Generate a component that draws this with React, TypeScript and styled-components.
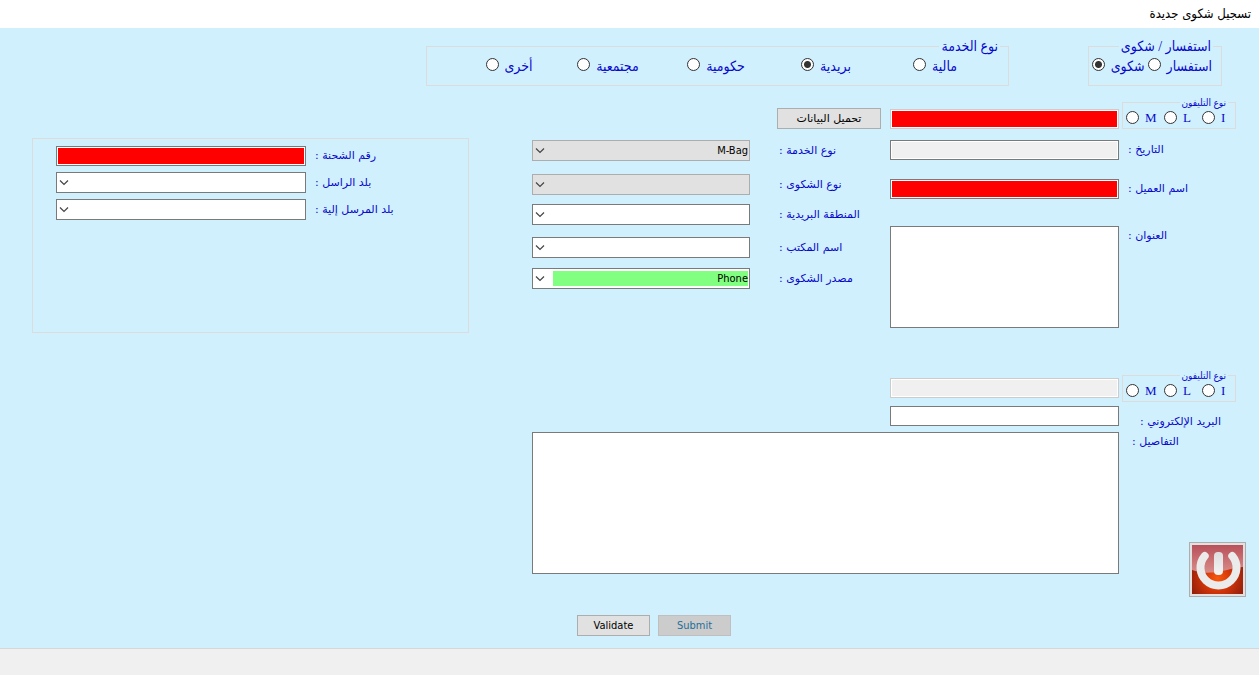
import React, { useState } from "react";
import styled, { createGlobalStyle } from "styled-components";

const uiFont = `"DejaVu Sans Condensed", "DejaVu Sans", sans-serif`;
const wideFont = `"DejaVu Sans", sans-serif`;
const serifFont = `"Liberation Serif", "DejaVu Sans Condensed", "DejaVu Sans", serif`;

const GlobalStyle = createGlobalStyle`
  *, *::before, *::after { box-sizing: border-box; }
  body { margin: 0; font-family: ${uiFont}; font-size: 11px; }
  button, input, select, textarea { font: inherit; margin: 0; border-radius: 0; }
`;

const Window = styled.div`
  direction: rtl;
  min-height: 100vh;
  display: flex;
  flex-direction: column;
  background: #d1f0fe;
  color: #0808cc;
`;

const TitleBar = styled.header`
  height: 28px;
  padding: 0 8px;
  display: flex;
  align-items: center;
  background: #fff;
`;

const Title = styled.h1`
  margin: 0;
  color: #000;
  font-size: 13px;
  line-height: 16px;
  font-weight: 400;
`;

const StatusBar = styled.footer`
  height: 27px;
  background: #f0f0f0;
  border-top: 1px solid #d7d7d7;
`;

const Body = styled.main`
  flex: 1;
  padding: 10px 0 12px;
`;

const TopGroups = styled.div`
  display: grid;
  grid-template-columns: 134px minmax(0, 1fr);
  column-gap: 79px;
  padding-right: 37px;
  padding-left: 33.8%;
`;

const GroupBox = styled.fieldset<{ $small?: boolean }>`
  min-width: 0;
  margin: 0;
  padding: 0;
  height: ${(p) => (p.$small ? 33 : 48)}px;
  border: 1px solid #dcdcdc;
  font-family: ${serifFont};
  font-size: ${(p) => (p.$small ? 13 : 14)}px;
`;

const Legend = styled.legend<{ $small?: boolean }>`
  margin-right: ${(p) => (p.$small ? 7 : 8)}px;
  padding: 0 2px;
  font-size: ${(p) => (p.$small ? 10 : 14)}px;
  line-height: ${(p) => (p.$small ? 13 : 17)}px;
`;

type RadioKind = "inquiry" | "service" | "phone";

const radioColumns: Record<RadioKind, string> = {
  inquiry: "max-content max-content",
  service: "repeat(5, 1fr)",
  phone: "24px 38px 38px",
};

const RadioRow = styled.div<{ $kind: RadioKind }>`
  display: grid;
  grid-template-columns: ${(p) => radioColumns[p.$kind]};
  column-gap: ${(p) => (p.$kind === "inquiry" ? 3 : 0)}px;
  padding-right: ${(p) => (p.$kind === "service" ? 51 : 9)}px;
`;

const RadioLabel = styled.label<{ $kind: RadioKind }>`
  display: flex;
  align-items: flex-start;
  justify-content: ${(p) => (p.$kind === "phone" ? "flex-end" : "flex-start")};
  gap: 6px;
  line-height: ${(p) => (p.$kind === "phone" ? 18 : 24)}px;
  white-space: nowrap;
`;

const RadioInput = styled.input<{ $kind: RadioKind }>`
  appearance: none;
  flex: none;
  width: 13px;
  height: 13px;
  border: 1px solid #333;
  && {
    margin-top: ${(p) => (p.$kind === "phone" ? 2 : 3)}px;
    border-radius: 50%;
  }
  background: #fff;
  &:checked { background: radial-gradient(circle, #333 3px, #fff 4px); }
`;

const Columns = styled.div`
  display: grid;
  grid-template-columns: minmax(0, 714fr) minmax(0, 437fr);
  column-gap: 63px;
  padding: 10px 13px 0 32px;
`;

const FormArea = styled.div`
  min-width: 0;
`;

const Halves = styled.div`
  display: grid;
  grid-template-columns: minmax(0, 356fr) minmax(0, 349fr);
  column-gap: 9px;
`;

const Stack = styled.div`
  display: flex;
  flex-direction: column;
`;

const Row = styled.div<{ $top?: number; $side: number; $start?: boolean }>`
  display: grid;
  grid-template-columns: ${(p) => p.$side}px minmax(0, 1fr);
  align-items: ${(p) => (p.$start ? "start" : "center")};
  margin-top: ${(p) => p.$top ?? 0}px;
`;

const FieldLabel = styled.label<{ $inset?: number; $above?: number }>`
  padding-top: ${(p) => p.$above ?? 0}px;
  padding-left: ${(p) => p.$inset ?? 9}px;
  text-align: left;
  font-family: ${wideFont};
  font-size: 11px;
  line-height: 20px;
  white-space: nowrap;
`;

const TextInput = styled.input<{ $fill?: string; $light?: boolean }>`
  width: 100%;
  height: 20px;
  padding: 0 4px;
  border: 1px solid ${(p) => (p.$light ? "#ccc" : "#7a7a7a")};
  background: ${(p) => p.$fill ?? "#fff"};
  box-shadow: inset 0 0 0 1px #fff;
  outline: 0;
`;

const TextArea = styled.textarea<{ $height: number }>`
  display: block;
  width: 100%;
  height: ${(p) => p.$height}px;
  border: 1px solid #7a7a7a;
  background: #fff;
  resize: none;
  outline: 0;
`;

const SelectWrap = styled.div`
  position: relative;
`;

const SelectBox = styled.select<{ $tone?: "grey" | "green" }>`
  appearance: none;
  display: block;
  width: 100%;
  height: 21px;
  padding: 2px 1px 2px 20px;
  border: 1px solid ${(p) => (p.$tone === "grey" ? "#adadad" : "#7a7a7a")};
  background: ${(p) =>
    p.$tone === "grey"
      ? "#e1e1e1"
      : p.$tone === "green"
        ? "linear-gradient(#80ff80, #80ff80) content-box, #fff"
        : "#fff"};
  color: #000;
  text-align: right;
  outline: 0;
  &:disabled { opacity: 1; color: #000; }
`;

const Arrow = styled.svg`
  position: absolute;
  left: 3px;
  top: 7px;
  pointer-events: none;
`;

const PhoneGroupCell = styled.div`
  padding: 0 10px 0 3px;
`;

const PhoneRow = styled(Row)`
  align-items: end;
`;

const PhoneInput = styled(TextInput)<{ $lift?: number }>`
  && { margin-bottom: ${(p) => p.$lift ?? 0}px; }
`;

const Button = styled.button<{ $width: number; $wide?: boolean }>`
  width: ${(p) => p.$width}px;
  height: 21px;
  padding: 0;
  border: 1px solid #adadad;
  background: #e1e1e1;
  color: #000;
  && { font-family: ${(p) => (p.$wide ? wideFont : uiFont)}; }
  &:disabled { background: #ccc; border-color: #bfbfbf; color: #1f6f98; }
`;

const Details = styled.div`
  display: grid;
  grid-template-columns: 127px minmax(0, 1fr);
`;

const DetailsSide = styled.div`
  display: flex;
  flex-direction: column;
  justify-content: space-between;
  padding-bottom: 39px;
`;

const Actions = styled.div`
  direction: ltr;
  display: flex;
  gap: 8px;
  margin-top: 41px;
  padding-left: 45px;
`;

const PowerButton = styled.button`
  width: 57px;
  height: 55px;
  padding: 2px;
  border: 1px solid #adadad;
  background: #e1e1e1;
  svg { display: block; width: 100%; height: 100%; }
`;

const ShipmentPanel = styled.section`
  height: 195px;
  margin-top: 42px;
  padding: 7px 0 0 23px;
  border: 1px solid #dcdcdc;
`;

function Combo({ id, value = "", tone }: { id: string; value?: string; tone?: "grey" | "green" }) {
  return (
    <SelectWrap>
      <SelectBox id={id} $tone={tone} disabled={tone === "grey"} defaultValue={value}>
        <option value={value}>{value}</option>
      </SelectBox>
      <Arrow width="10" height="8" viewBox="0 0 10 8" fill="none" stroke="#444" strokeWidth="1.2" aria-hidden="true">
        <path d="M1 1.5 5 5.5 9 1.5" />
      </Arrow>
    </SelectWrap>
  );
}

function Radios({
  name,
  kind,
  items,
  initial,
}: {
  name: string;
  kind: RadioKind;
  items: string[];
  initial?: string;
}) {
  const [picked, setPicked] = useState(initial);
  return (
    <RadioRow $kind={kind}>
      {items.map((item) => (
        <RadioLabel key={item} $kind={kind}>
          {item}
          <RadioInput
            $kind={kind}
            type="radio"
            name={name}
            checked={picked === item}
            onChange={() => setPicked(item)}
          />
        </RadioLabel>
      ))}
    </RadioRow>
  );
}

function PhoneType({ name }: { name: string }) {
  return (
    <PhoneGroupCell>
      <GroupBox $small>
        <Legend $small>نوع التليفون</Legend>
        <Radios name={name} kind="phone" items={["I", "L", "M"]} />
      </GroupBox>
    </PhoneGroupCell>
  );
}

const complaintFields: { id: string; label: string; top: number; value?: string; tone?: "grey" | "green" }[] = [
  { id: "service", label: "نوع الخدمة :", top: 11, value: "M-Bag", tone: "grey" },
  { id: "kind", label: "نوع الشكوى :", top: 13, tone: "grey" },
  { id: "zone", label: "المنطقة البريدية :", top: 9 },
  { id: "office", label: "اسم المكتب :", top: 12 },
  { id: "source", label: "مصدر الشكوى :", top: 10, value: "Phone", tone: "green" },
];

export default function App() {
  return (
    <Window lang="ar">
      <GlobalStyle />
      <TitleBar>
        <Title>تسجيل شكوى جديدة</Title>
      </TitleBar>
      <Body>
        <TopGroups>
          <GroupBox>
            <Legend>استفسار / شكوى</Legend>
            <Radios name="request" kind="inquiry" items={["استفسار", "شكوى"]} initial="شكوى" />
          </GroupBox>
          <GroupBox>
            <Legend>نوع الخدمة</Legend>
            <Radios
              name="sector"
              kind="service"
              items={["مالية", "بريدية", "حكومية", "مجتمعية", "أخرى"]}
              initial="بريدية"
            />
          </GroupBox>
        </TopGroups>
        <Columns>
          <FormArea>
            <Halves>
              <Stack>
                <PhoneRow $side={127}>
                  <PhoneType name="phone1" />
                  <PhoneInput aria-label="رقم التليفون" $fill="#f00" $light />
                </PhoneRow>
                <Row $side={127} $top={11} $start>
                  <FieldLabel htmlFor="date">التاريخ :</FieldLabel>
                  <TextInput id="date" $fill="#f0f0f0" readOnly />
                </Row>
                <Row $side={127} $top={19}>
                  <FieldLabel htmlFor="customer">اسم العميل :</FieldLabel>
                  <TextInput id="customer" $fill="#f00" />
                </Row>
                <Row $side={127} $top={27} $start>
                  <FieldLabel htmlFor="address">العنوان :</FieldLabel>
                  <TextArea id="address" $height={102} />
                </Row>
              </Stack>
              <Stack>
                <Row $side={104} $top={12}>
                  <Button type="button" $width={104} $wide>تحميل البيانات</Button>
                </Row>
                {complaintFields.map((f) => (
                  <Row key={f.id} $side={131} $top={f.top}>
                    <FieldLabel htmlFor={f.id} $inset={29}>{f.label}</FieldLabel>
                    <Combo id={f.id} value={f.value} tone={f.tone} />
                  </Row>
                ))}
              </Stack>
            </Halves>
            <Halves>
              <Stack>
                <PhoneRow $side={127} $top={41}>
                  <PhoneType name="phone2" />
                  <PhoneInput aria-label="رقم تليفون آخر" $fill="#f0f0f0" $light $lift={4} disabled />
                </PhoneRow>
                <Row $side={127} $top={4} $start>
                  <FieldLabel htmlFor="email" $inset={21} $above={6}>البريد الإلكتروني :</FieldLabel>
                  <TextInput id="email" type="email" />
                </Row>
              </Stack>
            </Halves>
            <Details>
              <DetailsSide>
                <FieldLabel htmlFor="details" $inset={13}>التفاصيل :</FieldLabel>
                <PowerButton type="button" aria-label="خروج">
                  <svg viewBox="0 0 51 49" aria-hidden="true">
                    <defs>
                      <radialGradient id="glow" cx="50%" cy="68%" r="56%">
                        <stop offset="0" stopColor="#f85a10" />
                        <stop offset="0.5" stopColor="#d03408" />
                        <stop offset="1" stopColor="#94200c" />
                      </radialGradient>
                      <linearGradient id="gloss" x1="0" y1="0" x2="0" y2="1">
                        <stop offset="0" stopColor="#b8505a" />
                        <stop offset="1" stopColor="#d88c88" />
                      </linearGradient>
                      <linearGradient id="metal" x1="0" y1="0" x2="0" y2="1">
                        <stop offset="0" stopColor="#dedede" />
                        <stop offset="1" stopColor="#f4f4f4" />
                      </linearGradient>
                    </defs>
                    <rect width="51" height="49" fill="url(#glow)" />
                    <path d="M0 0H51V22C38 23 32 27 20 27.500C12 28 5 27 0 25Z" fill="url(#gloss)" />
                    <path
                      d="M12.700 11A18 18 0 1 0 40.300 11"
                      fill="none"
                      stroke="#ebebeb"
                      strokeWidth="8"
                      strokeLinecap="round"
                    />
                    <rect x="22" y="7" width="9" height="23" rx="4" fill="url(#metal)" />
                  </svg>
                </PowerButton>
              </DetailsSide>
              <div>
                <TextArea id="details" $height={142} />
                <Actions>
                  <Button type="button" $width={73}>Validate</Button>
                  <Button type="button" $width={73} disabled>Submit</Button>
                </Actions>
              </div>
            </Details>
          </FormArea>
          <ShipmentPanel>
            <Row $side={162}>
              <FieldLabel htmlFor="shipment">رقم الشحنة :</FieldLabel>
              <TextInput id="shipment" $fill="#f00" />
            </Row>
            <Row $side={162} $top={6}>
              <FieldLabel htmlFor="from">بلد الراسل :</FieldLabel>
              <Combo id="from" />
            </Row>
            <Row $side={162} $top={6}>
              <FieldLabel htmlFor="to">بلد المرسل إلية :</FieldLabel>
              <Combo id="to" />
            </Row>
          </ShipmentPanel>
        </Columns>
      </Body>
      <StatusBar />
    </Window>
  );
}
